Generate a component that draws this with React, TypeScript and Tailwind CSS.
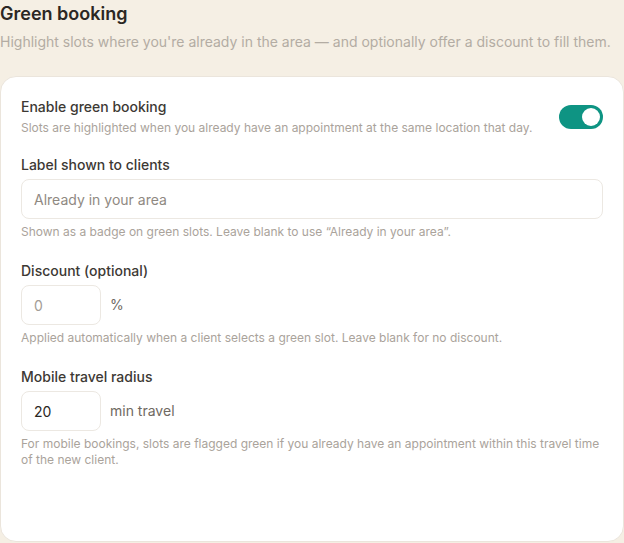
export default function App() {
  return (
    <div className="min-h-[543px] bg-[#f5efe4] font-['Inter',sans-serif] text-[#2b2723]">
      <h2 className="text-lg leading-7 font-semibold text-[#2b2723]">Green booking</h2>
      <p className="mt-1 text-sm leading-5 text-[#b3aca3]">
        Highlight slots where you're already in the area — and optionally offer a discount to fill them.
      </p>

      <div className="mt-6 h-[466px] rounded-2xl border border-[#ebe5dc] bg-white px-5 pt-5">
        <div className="flex items-center justify-between">
          <div>
            <div className="text-sm leading-5 font-medium text-[#3d3934]">Enable green booking</div>
            <div className="mt-[3px] text-xs leading-4 text-[#aaa39b]">
              Slots are highlighted when you already have an appointment at the same location that day.
            </div>
          </div>
          <button className="relative h-6 w-11 shrink-0 rounded-full bg-[#0e9483]">
            <span className="absolute top-[3px] right-[3px] h-[18px] w-[18px] rounded-full bg-white" />
          </button>
        </div>

        <div className="mt-[19px]">
          <label className="block text-sm leading-5 font-medium text-[#3d3934]">Label shown to clients</label>
          <input
            className="mt-1 block h-10 w-full rounded-lg border border-[#ece8e2] px-3 text-sm text-[#2b2723] outline-none placeholder:text-[#8f8982]"
            placeholder="Already in your area"
          />
          <p className="mt-[5px] text-xs leading-4 text-[#aaa39b]">
            Shown as a badge on green slots. Leave blank to use “Already in your area”.
          </p>
        </div>

        <div className="mt-[21px]">
          <label className="block text-sm leading-5 font-medium text-[#3d3934]">Discount (optional)</label>
          <div className="mt-1 flex items-center gap-[9px]">
            <input
              className="block h-10 w-20 rounded-lg border border-[#ece8e2] px-3 text-sm text-[#2b2723] outline-none placeholder:text-[#a39d96]"
              placeholder="0"
            />
            <span className="text-sm text-[#6f6962]">%</span>
          </div>
          <p className="mt-[5px] text-xs leading-4 text-[#aaa39b]">
            Applied automatically when a client selects a green slot. Leave blank for no discount.
          </p>
        </div>

        <div className="mt-[21px]">
          <label className="block text-sm leading-5 font-medium text-[#3d3934]">Mobile travel radius</label>
          <div className="mt-1 flex items-center gap-[9px]">
            <input
              className="block h-10 w-20 rounded-lg border border-[#ece8e2] px-3 text-sm text-[#2b2723] outline-none"
              defaultValue="20"
            />
            <span className="text-sm text-[#6f6962]">min travel</span>
          </div>
          <p className="mt-[5px] text-xs leading-4 text-[#aaa39b]">
            For mobile bookings, slots are flagged green if you already have an appointment within this travel time
            of the new client.
          </p>
        </div>
      </div>
    </div>
  );
}
